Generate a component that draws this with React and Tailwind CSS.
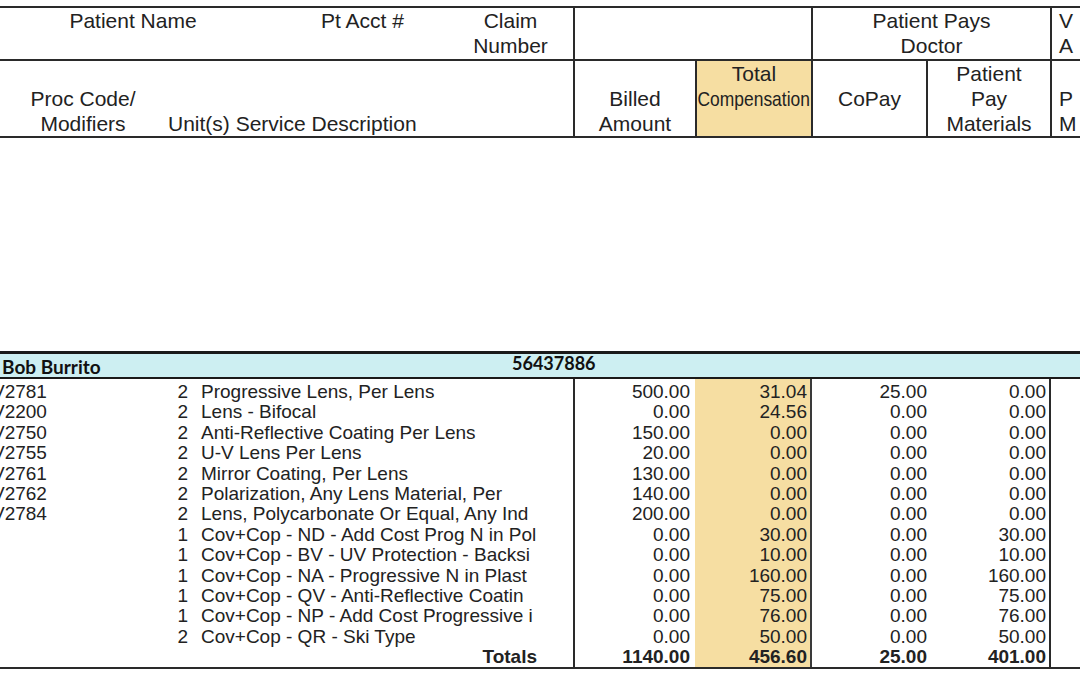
import React from "react";

const rows = [
  ["V2781", "2", "Progressive Lens, Per Lens", "500.00", "31.04", "25.00", "0.00"],
  ["V2200", "2", "Lens - Bifocal", "0.00", "24.56", "0.00", "0.00"],
  ["V2750", "2", "Anti-Reflective Coating Per Lens", "150.00", "0.00", "0.00", "0.00"],
  ["V2755", "2", "U-V Lens Per Lens", "20.00", "0.00", "0.00", "0.00"],
  ["V2761", "2", "Mirror Coating, Per Lens", "130.00", "0.00", "0.00", "0.00"],
  ["V2762", "2", "Polarization, Any Lens Material, Per", "140.00", "0.00", "0.00", "0.00"],
  ["V2784", "2", "Lens, Polycarbonate Or Equal, Any Ind", "200.00", "0.00", "0.00", "0.00"],
  ["", "1", "Cov+Cop - ND - Add Cost Prog N in Pol", "0.00", "30.00", "0.00", "30.00"],
  ["", "1", "Cov+Cop - BV - UV Protection - Backsi", "0.00", "10.00", "0.00", "10.00"],
  ["", "1", "Cov+Cop - NA - Progressive N in Plast", "0.00", "160.00", "0.00", "160.00"],
  ["", "1", "Cov+Cop - QV - Anti-Reflective Coatin", "0.00", "75.00", "0.00", "75.00"],
  ["", "1", "Cov+Cop - NP - Add Cost Progressive i", "0.00", "76.00", "0.00", "76.00"],
  ["", "2", "Cov+Cop - QR - Ski Type", "0.00", "50.00", "0.00", "50.00"],
];

const totals = ["1140.00", "456.60", "25.00", "401.00"];

function Col({ idx, className, total, bold }) {
  return (
    <div className={className}>
      {rows.map((r, i) => (
        <div key={i} className="h-[20.4px] leading-[20.4px] whitespace-nowrap">
          {r[idx] || "\u00a0"}
        </div>
      ))}
      <div className={"h-[20.4px] leading-[20.4px] whitespace-nowrap " + (bold ? "font-bold" : "")}>
        {total || "\u00a0"}
      </div>
    </div>
  );
}

export default function App() {
  return (
    <div className="w-[1080px] h-[675px] overflow-hidden bg-white text-[#222] font-['Liberation_Sans',Arial,sans-serif]">
      {/* Header */}
      <div className="mt-[6px] border-t-2 border-[#2a2a2a]">
        {/* Row 1 */}
        <div className="flex h-[53px] text-[21px] leading-[25px] border-b-2 border-[#2a2a2a]">
          <div className="flex w-[573px]">
            <div className="w-[266px] text-center">Patient Name</div>
            <div className="w-[182px] pl-[55px]">Pt Acct #</div>
            <div className="w-[125px] text-center">
              <div>Claim</div>
              <div>Number</div>
            </div>
          </div>
          <div className="w-[238px] border-l-2 border-[#2a2a2a]"></div>
          <div className="w-[239px] border-l-2 border-[#2a2a2a] text-center">
            <div>Patient Pays</div>
            <div>Doctor</div>
          </div>
          <div className="flex-1 border-l-2 border-[#2a2a2a] pl-[7px]">
            <div>V</div>
            <div>A</div>
          </div>
        </div>
        {/* Row 2 */}
        <div className="flex h-[77px] text-[21px] leading-[25px] border-b-2 border-[#2a2a2a]">
          <div className="flex w-[573px] items-end">
            <div className="w-[166px] text-center">
              <div>Proc Code/</div>
              <div>Modifiers</div>
            </div>
            <div className="flex-1 pl-[2px]">Unit(s) Service Description</div>
          </div>
          <div className="w-[122px] border-l-2 border-[#2a2a2a] flex flex-col justify-end items-center">
            <div>Billed</div>
            <div>Amount</div>
          </div>
          <div className="w-[116px] border-l-2 border-[#2a2a2a] bg-[#f6dea2] flex flex-col items-center">
            <div>Total</div>
            <div className="whitespace-nowrap scale-x-[0.83]">Compensation</div>
          </div>
          <div className="w-[115px] border-l-2 border-[#2a2a2a] flex flex-col justify-center items-center">
            <div>CoPay</div>
          </div>
          <div className="w-[124px] border-l-2 border-[#2a2a2a] flex flex-col items-center">
            <div>Patient</div>
            <div>Pay</div>
            <div>Materials</div>
          </div>
          <div className="flex-1 border-l-2 border-[#2a2a2a] pl-[7px] flex flex-col justify-end">
            <div>P</div>
            <div>M</div>
          </div>
        </div>
      </div>

      {/* Patient band */}
      <div className="mt-[213px] border-t-[3px] border-b-2 border-[#1a1a1a] bg-[#cdeff2] h-[28px] flex font-['Lato',sans-serif] font-bold text-[#111]">
        <div className="w-[512px] pl-[2px] text-[19px] leading-[24px] pt-[1px]">Bob Burrito</div>
        <div className="text-[18px] leading-[19px]">56437886</div>
      </div>

      {/* Data */}
      <div className="flex text-[19px] border-b-2 border-[#2a2a2a]">
        <Col idx={0} className="w-[158px] -ml-[8px] pt-[3px]" />
        <Col idx={1} className="w-[38px] text-right pt-[3px]" />
        <div className="w-[385px] pl-[13px] pt-[3px]">
          {rows.map((r, i) => (
            <div key={i} className="h-[20.4px] leading-[20.4px] whitespace-nowrap">{r[2]}</div>
          ))}
          <div className="h-[20.4px] leading-[20.4px] font-bold text-right pr-[36px]">Totals</div>
        </div>
        <Col idx={3} total={totals[0]} bold className="w-[122px] border-l-2 border-[#2a2a2a] text-right pr-[5px] pt-[3px]" />
        <Col idx={4} total={totals[1]} bold className="w-[117px] bg-[#f6dea2] border-r-2 border-[#3a3a3a] text-right pr-[3px] pt-[3px]" />
        <Col idx={5} total={totals[2]} bold className="w-[118px] text-right pr-[3px] pt-[3px]" />
        <Col idx={6} total={totals[3]} bold className="w-[121px] border-r-2 border-[#2a2a2a] text-right pr-[3px] pt-[3px]" />
        <div className="flex-1"></div>
      </div>
    </div>
  );
}
